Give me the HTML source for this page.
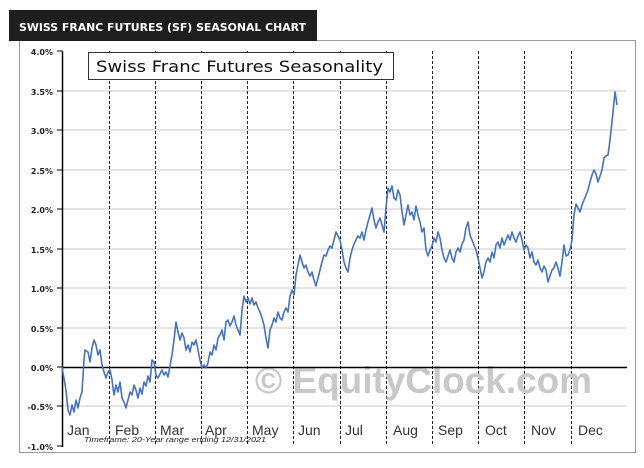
<!DOCTYPE html>
<html><head><style>
body{margin:0;background:#fff;width:644px;height:468px;overflow:hidden;font-family:"Liberation Sans",sans-serif}
</style></head><body>
<svg width="644" height="468" xmlns="http://www.w3.org/2000/svg" style="position:absolute;left:0;top:0">
<rect x="19.5" y="40.5" width="616" height="412" fill="#fff" stroke="#999" stroke-width="1"/>
<rect x="9" y="10" width="308" height="31" fill="#1e1e1e"/>
<text x="19" y="31" font-family="'DejaVu Sans',sans-serif" font-weight="bold" font-size="10.5" fill="#fff" textLength="287" lengthAdjust="spacingAndGlyphs">SWISS FRANC FUTURES (SF) SEASONAL CHART</text>
<g stroke="#c8c8c8" stroke-width="1">
<line x1="62" y1="91" x2="626" y2="91"/><line x1="62" y1="130" x2="626" y2="130"/><line x1="62" y1="170" x2="626" y2="170"/><line x1="62" y1="209" x2="626" y2="209"/><line x1="62" y1="249" x2="626" y2="249"/><line x1="62" y1="288" x2="626" y2="288"/><line x1="62" y1="328" x2="626" y2="328"/><line x1="62" y1="406" x2="626" y2="406"/>
</g>
<g stroke="#222" stroke-width="1" stroke-dasharray="3,2">
<line x1="109.5" y1="51" x2="109.5" y2="446"/><line x1="155.5" y1="51" x2="155.5" y2="446"/><line x1="201.5" y1="51" x2="201.5" y2="446"/><line x1="247.5" y1="51" x2="247.5" y2="446"/><line x1="293.5" y1="51" x2="293.5" y2="446"/><line x1="340.5" y1="51" x2="340.5" y2="446"/><line x1="386.5" y1="51" x2="386.5" y2="446"/><line x1="432.5" y1="51" x2="432.5" y2="446"/><line x1="478.5" y1="51" x2="478.5" y2="446"/><line x1="524.5" y1="51" x2="524.5" y2="446"/><line x1="571.5" y1="51" x2="571.5" y2="446"/>
</g>
<text x="255" y="393" font-weight="bold" font-size="37" fill="#c8c8c8" textLength="337" lengthAdjust="spacingAndGlyphs">© EquityClock.com</text>
<line x1="62.5" y1="51" x2="62.5" y2="447" stroke="#000" stroke-width="1.5"/>
<line x1="62" y1="367.5" x2="627" y2="367.5" stroke="#000" stroke-width="1.5"/>
<g font-family="'DejaVu Sans',sans-serif" font-weight="bold" font-size="8" fill="#222" text-anchor="end">
<text x="53" y="55">4.0%</text><text x="53" y="95">3.5%</text><text x="53" y="134">3.0%</text><text x="53" y="174">2.5%</text><text x="53" y="213">2.0%</text><text x="53" y="253">1.5%</text><text x="53" y="292">1.0%</text><text x="53" y="332">0.5%</text><text x="53" y="371">0.0%</text><text x="53" y="410">-0.5%</text><text x="53" y="450">-1.0%</text>
</g>
<g stroke="#000" stroke-width="1"><line x1="57" y1="51" x2="62" y2="51"/><line x1="57" y1="91" x2="62" y2="91"/><line x1="57" y1="130" x2="62" y2="130"/><line x1="57" y1="170" x2="62" y2="170"/><line x1="57" y1="209" x2="62" y2="209"/><line x1="57" y1="249" x2="62" y2="249"/><line x1="57" y1="288" x2="62" y2="288"/><line x1="57" y1="328" x2="62" y2="328"/><line x1="57" y1="367" x2="62" y2="367"/><line x1="57" y1="406" x2="62" y2="406"/><line x1="57" y1="446" x2="62" y2="446"/></g>
<g font-size="14" fill="#333">
<text x="67" y="435">Jan</text><text x="115" y="435">Feb</text><text x="160" y="435">Mar</text><text x="205" y="435">Apr</text><text x="252" y="435">May</text><text x="298" y="435">Jun</text><text x="345" y="435">Jul</text><text x="393" y="435">Aug</text><text x="438" y="435">Sep</text><text x="485" y="435">Oct</text><text x="531" y="435">Nov</text><text x="578" y="435">Dec</text>
</g>
<text x="84" y="442" font-size="7.5" font-style="italic" fill="#222" textLength="182" lengthAdjust="spacingAndGlyphs">Timeframe:  20-Year range ending 12/31/2021</text>
<rect x="88.5" y="52.5" width="305" height="27" fill="#fff" stroke="#333" stroke-width="1"/>
<text x="96" y="72" font-family="'DejaVu Sans',sans-serif" font-size="16" fill="#111" textLength="287" lengthAdjust="spacingAndGlyphs">Swiss Franc Futures Seasonality</text>
<polyline fill="none" stroke="#4472c4" stroke-width="1.6" stroke-linejoin="round" points="62,367 66,390 68,410 70,415 72,405 74,412 76,400 78,408 80,398 82,392 84,360 85,350 88,352 90,362 92,348 94,340 96,345 98,355 100,350 102,365 104,372 106,378 108,372 110,370 112,380 114,395 116,385 118,392 120,382 122,398 124,402 126,408 128,400 130,392 132,395 134,385 136,390 138,398 140,388 142,394 144,382 146,386 148,376 150,382 152,360 154,362 156,375 158,378 160,374 162,370 164,375 166,372 168,377 170,366 172,355 174,340 176,322 178,332 180,340 182,333 184,338 186,350 188,345 190,352 192,342 194,345 196,340 198,350 200,360 202,368 204,365 206,368 208,363 210,352 212,355 214,345 216,350 218,338 220,335 222,330 224,340 226,322 228,320 230,326 232,322 234,316 236,325 238,330 240,335 242,310 244,296 246,302 248,298 250,304 252,298 254,305 256,302 258,308 260,312 262,318 264,325 266,338 268,348 270,330 272,325 274,318 276,322 278,312 280,318 282,320 284,312 286,308 288,312 290,296 292,290 294,295 296,275 298,265 300,255 302,262 304,268 306,265 308,272 310,276 312,272 314,280 316,286 318,278 320,270 322,262 324,255 326,256 328,250 330,246 332,248 334,240 336,232 338,236 340,240 342,250 344,262 346,268 348,272 350,258 352,250 354,244 356,240 358,236 360,238 362,232 364,240 366,230 368,222 370,215 372,208 374,220 376,228 378,222 380,218 382,225 384,232 386,208 388,188 390,192 392,186 394,198 396,200 398,190 400,195 402,212 404,225 406,215 408,205 410,215 412,212 414,220 416,206 418,215 420,222 422,232 424,228 426,250 428,256 430,250 432,246 434,238 436,242 438,232 440,238 442,250 444,258 446,262 448,256 450,250 452,258 454,262 456,252 458,248 460,252 462,244 464,240 466,228 468,222 470,235 472,240 474,245 476,250 478,258 480,268 482,278 484,272 486,262 488,258 490,262 492,252 494,258 496,245 498,242 500,248 502,238 504,245 506,240 508,235 510,240 512,232 514,238 516,242 518,236 520,232 522,240 524,250 526,245 528,248 530,258 532,252 534,262 536,265 538,260 540,268 542,272 544,266 546,270 548,282 550,276 552,270 554,268 556,262 558,268 560,276 562,262 564,245 566,256 568,255 570,250 572,240 574,215 576,204 578,208 580,212 582,205 584,200 586,195 588,190 590,182 592,175 594,170 596,174 598,182 600,176 602,170 604,158 606,156 608,155 610,140 612,122 614,102 615,92 616,98 617,105"/>
</svg>
</body></html>
